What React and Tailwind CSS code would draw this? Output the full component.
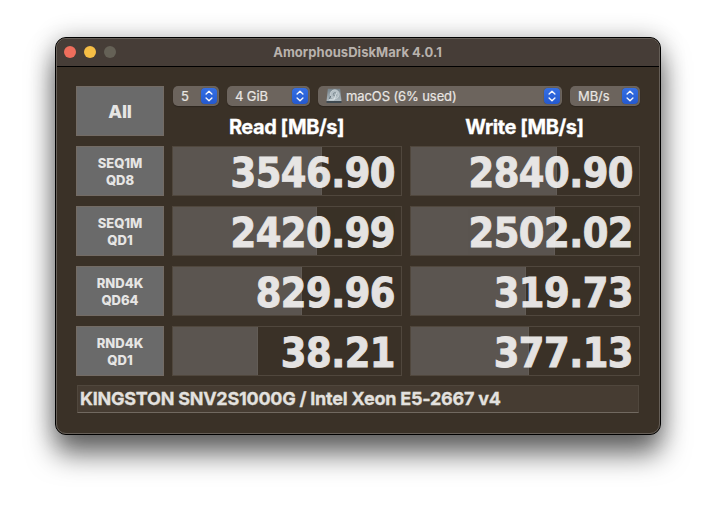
import React from "react";

const results = [
  { top: "SEQ1M", bottom: "QD8", read: ["3546.90", 149], write: ["2840.90", 146] },
  { top: "SEQ1M", bottom: "QD1", read: ["2420.99", 144], write: ["2502.02", 144] },
  { top: "RND4K", bottom: "QD64", read: ["829.96", 129], write: ["319.73", 115] },
  { top: "RND4K", bottom: "QD1", read: ["38.21", 85], write: ["377.13", 118] },
];

function Chevrons() {
  return (
    <span className="flex h-4 w-4 shrink-0 items-center justify-center rounded-[4px] bg-linear-to-b from-[#356fe4] to-[#2459cf] shadow-[0_0_1px_rgba(0,0,0,0.5)]">
      <svg width="16" height="16" viewBox="0 0 16 16" fill="none" stroke="#f4f6fc" strokeWidth="1.4" strokeLinecap="round" strokeLinejoin="round">
        <path d="M5.1 6.1 8 3.3l2.9 2.8M5.1 9.9 8 12.7l2.9-2.8" />
      </svg>
    </span>
  );
}

function Drive() {
  return (
    <svg width="16" height="16" viewBox="0 0 15 15" className="mr-1 shrink-0">
      <defs>
        <linearGradient id="drive" x1="0" y1="0" x2="0" y2="1">
          <stop offset="0" stopColor="#75828a" />
          <stop offset="1" stopColor="#aebac1" />
        </linearGradient>
      </defs>
      <path d="M1.7.8h11.6l1.2 11.4H.5z" fill="url(#drive)" />
      <path d="M.5 12.2h14v1.9H.5z" fill="#3f4a51" />
      <circle cx="8.2" cy="5.9" r="4.2" fill="#b3bec4" stroke="#d3dbde" strokeWidth=".6" />
      <circle cx="8.4" cy="5.9" r="1.6" fill="#a4b0b6" stroke="#76838b" strokeWidth=".7" />
      <path d="M3 11.1h4.6L10 4.3" stroke="#dfe6e9" strokeWidth=".9" fill="none" />
      <path d="M3.1 10.2 4.4 7.6" stroke="#65737b" strokeWidth="1" fill="none" />
    </svg>
  );
}

function Select({ width, label, icon }) {
  return (
    <div className={`${width} flex h-5 items-center rounded-[5px] bg-[#6c645d] pr-0.5 pl-2 text-[13px] leading-5 tracking-[-0.1px] text-[#e9e6e3] shadow-[0_1px_1px_rgba(0,0,0,0.25)] [-webkit-text-stroke:0.2px_#e9e6e3]`}>
      {icon}
      <span className="grow whitespace-pre">{label}</span>
      <Chevrons />
    </div>
  );
}

function TestButton({ children, size }) {
  return (
    <button className={`${size} flex h-[50px] w-[88px] shrink-0 flex-col items-center justify-center border border-[#736b64] bg-[#6a6a6a] font-extrabold text-[#e6e5e4]`}>
      {children}
    </button>
  );
}

function Meter({ value, fill }) {
  return (
    <div className="relative flex h-[50px] w-[230px] items-center justify-end border border-[#50473d] pr-1.5">
      <div className="absolute inset-y-0 left-0 border-r border-[#625c56] bg-[#5b5550]" style={{ width: fill }} />
      <span className="relative top-px pt-px font-['DejaVu_Sans_Condensed','DejaVu_Sans',sans-serif] text-[41px] leading-[50px] font-bold tracking-[-0.5px] text-[#f3f2f1] opacity-92 [-webkit-text-stroke:0.9px_#f3f2f1]">
        {value}
      </span>
    </div>
  );
}

export default function App() {
  return (
    <div className="h-[508px] w-[716px] overflow-hidden bg-white pt-[37px] pl-[55px] font-['Inter',sans-serif]">
      <main className="h-[398px] w-[606px] rounded-[11px] border border-black bg-[#3a3127] shadow-[0_19px_28px_rgba(0,0,0,0.58),0_0_24px_rgba(0,0,0,0.24)]">
        <div className="h-full overflow-hidden rounded-[10px] border border-[#665f58]">
          <header className="flex h-7 items-center border-b border-black bg-[#463d37] pl-[7px]">
            <div className="relative -top-px flex gap-2">
              <i className="size-3 rounded-full bg-[#ee6e5c]" />
              <i className="size-3 rounded-full bg-[#f6be45]" />
              <i className="size-3 rounded-full bg-[#656156]" />
            </div>
            <h1 className="grow pr-[60px] text-center text-[13px] font-bold tracking-[0.05px] text-[#b9b2ad]">AmorphousDiskMark 4.0.1</h1>
          </header>

          <section className="flex flex-col gap-2.5 px-[19px] pt-[19px]">
            <div className="flex h-[50px] gap-2">
              <TestButton size="text-[18px] tracking-[-0.2px]">All</TestButton>
              <div className="w-[468px]">
                <div className="flex gap-2 pl-px">
                  <Select width="w-[46px]" label="5" />
                  <Select width="w-[83px]" label="4 GiB" />
                  <Select width="w-[244px]" label="macOS (6% used)" icon={<Drive />} />
                  <Select width="w-[70px]" label="MB/s" />
                </div>
                <div className="flex gap-2 pt-[9px] text-center text-[20px] leading-6 font-bold tracking-[-0.46px] text-white [-webkit-text-stroke:0.3px_white]">
                  <h2 className="w-[230px] pr-px">Read [MB/s]</h2>
                  <h2 className="w-[230px] pr-px">Write [MB/s]</h2>
                </div>
              </div>
            </div>

            {results.map((row) => (
              <div key={row.top + row.bottom} className="flex gap-2">
                <TestButton size="pt-0.5 text-[13px] leading-[17px]">
                  <span>{row.top}</span>
                  <span>{row.bottom}</span>
                </TestButton>
                <Meter value={row.read[0]} fill={row.read[1]} />
                <Meter value={row.write[0]} fill={row.write[1]} />
              </div>
            ))}
          </section>

          <footer className="mx-5 mt-[9px] h-7 border border-[#50473d] border-b-[#716960] bg-[#463c32] pl-[2px] text-[18px] leading-[26px] font-bold tracking-[-0.24px] text-[#e3e1df] [-webkit-text-stroke:0.3px_#e3e1df]">
            KINGSTON SNV2S1000G / Intel Xeon E5-2667 v4
          </footer>
        </div>
      </main>
    </div>
  );
}
